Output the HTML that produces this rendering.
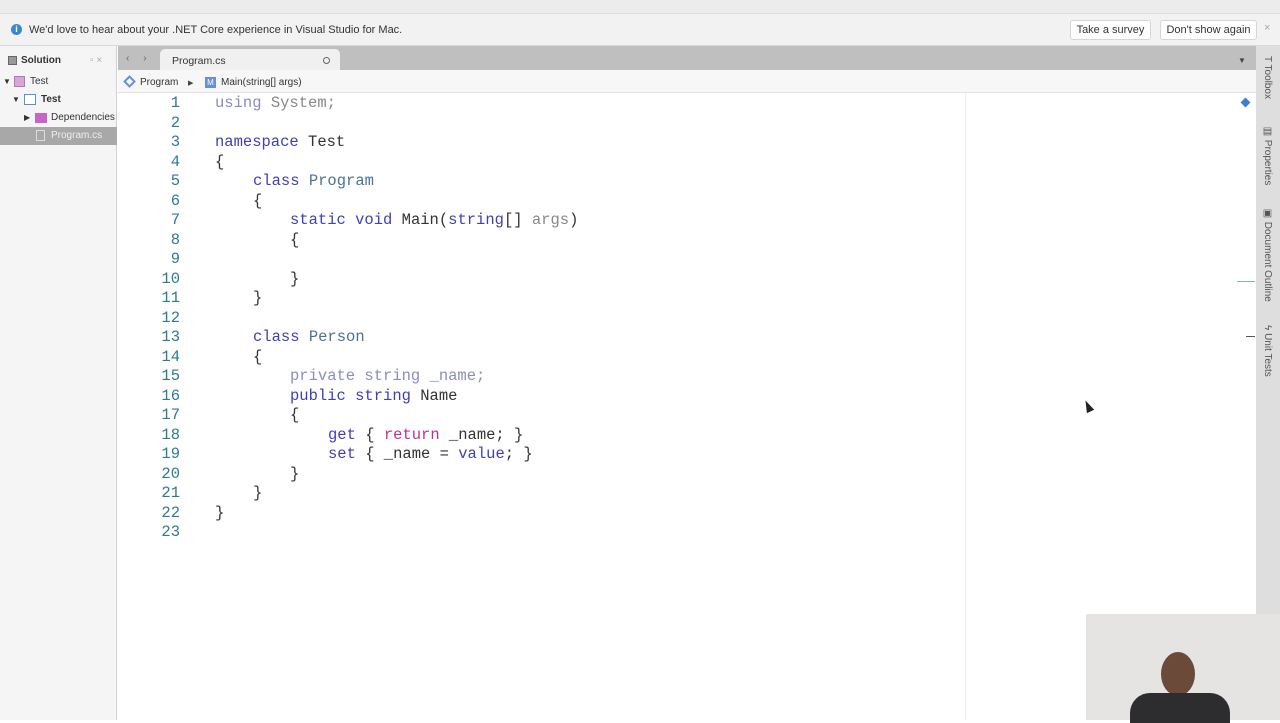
<!DOCTYPE html>
<html><head><style>
*{margin:0;padding:0;box-sizing:border-box}
body{width:1280px;height:720px;overflow:hidden;background:#fff;font-family:"Liberation Sans",sans-serif;position:relative}
.abs{position:absolute}
.code{font-family:"Liberation Mono",monospace;font-size:15.5px;color:#333}
.ln{position:absolute;left:140px;width:40px;text-align:right;color:#2d7b8c}
.l{position:absolute;white-space:pre}
.k{color:#3f3fb8}.t{color:#4a7290}.g{color:#8c8cc0}.r{color:#b8329a}
</style></head><body>
<div class="abs" style="left:0;top:0;width:1280px;height:14px;background:#ececec;border-bottom:1px solid #ddd"></div>
<div class="abs" style="left:0;top:14px;width:1280px;height:32px;background:#f2f2f2;border-bottom:1px solid #d8d8d8"></div>
<div class="abs" style="left:11px;top:24px;width:11px;height:11px;border-radius:50%;background:#3b86d1;color:#fff;font-size:9px;text-align:center;line-height:11px;font-weight:bold">i</div>
<div class="abs" style="left:29px;top:24px;font-size:11px;color:#333">We'd love to hear about your .NET Core experience in Visual Studio for Mac.</div>
<div class="abs" style="left:1070px;top:20px;width:81px;height:20px;background:#fff;border:1px solid #d6d6d6;border-radius:3px;font-size:11px;color:#333;text-align:center;line-height:19px">Take a survey</div>
<div class="abs" style="left:1160px;top:20px;width:97px;height:20px;background:#fff;border:1px solid #d6d6d6;border-radius:3px;font-size:11px;color:#333;text-align:center;line-height:19px">Don't show again</div>
<div class="abs" style="left:1264px;top:22px;font-size:11px;color:#aaa">×</div>
<!-- sidebar -->
<div class="abs" style="left:0;top:46px;width:117px;height:674px;background:#f5f5f5;border-right:1px solid #d0d0d0"></div>
<div class="abs" style="left:8px;top:56px;width:9px;height:9px;border:1px solid #666;background:#999"></div>
<div class="abs" style="left:21px;top:55px;font-size:10px;font-weight:bold;color:#333">Solution</div>
<div class="abs" style="left:90px;top:55px;font-size:10px;color:#aaa">▫ ×</div>
<div class="abs" style="left:3px;top:77px;font-size:8px;color:#333">▼</div>
<div class="abs" style="left:14px;top:76px;width:11px;height:11px;background:#d7a6d8;border:1px solid #b27ab5"></div>
<div class="abs" style="left:30px;top:76px;font-size:10px;color:#333">Test</div>
<div class="abs" style="left:12px;top:95px;font-size:8px;color:#333">▼</div>
<div class="abs" style="left:24px;top:94px;width:12px;height:11px;border:1px solid #5a8fd0;background:#fff"></div>
<div class="abs" style="left:41px;top:94px;font-size:10px;font-weight:bold;color:#333">Test</div>
<div class="abs" style="left:24px;top:113px;font-size:8px;color:#333">▶</div>
<div class="abs" style="left:35px;top:113px;width:12px;height:10px;background:#c465c8"></div>
<div class="abs" style="left:51px;top:112px;font-size:10px;color:#333">Dependencies</div>
<div class="abs" style="left:0;top:127px;width:117px;height:18px;background:#a8a8a8"></div>
<div class="abs" style="left:36px;top:130px;width:9px;height:11px;border:1px solid #ddd"></div>
<div class="abs" style="left:51px;top:130px;font-size:10px;color:#eee">Program.cs</div>
<!-- tabs -->
<div class="abs" style="left:118px;top:46px;width:1138px;height:24px;background:#bfbfbf"></div>
<div class="abs" style="left:126px;top:53px;font-size:10px;color:#666">‹ &nbsp;&nbsp;&nbsp; ›</div>
<div class="abs" style="left:160px;top:49px;width:180px;height:21px;background:#f0f0f0;border-radius:5px 5px 0 0"></div>
<div class="abs" style="left:172px;top:55px;font-size:10.5px;color:#333">Program.cs</div>
<div class="abs" style="left:323px;top:57px;width:7px;height:7px;border:1px solid #666;border-radius:50%"></div>
<div class="abs" style="left:1238px;top:56px;font-size:8px;color:#444">▼</div>
<div class="abs" style="left:118px;top:70px;width:1138px;height:23px;background:#f7f7f7;border-bottom:1px solid #e2e2e2"></div>
<div class="abs" style="left:125px;top:77px;width:9px;height:9px;border:2px solid #6a8ed4;transform:rotate(45deg)"></div>
<div class="abs" style="left:140px;top:77px;font-size:10px;color:#333">Program</div>
<div class="abs" style="left:188px;top:79px;font-size:7px;color:#444">▶</div>
<div class="abs" style="left:205px;top:77px;width:11px;height:11px;background:#6a8ed4;color:#fff;font-size:8px;text-align:center;line-height:11px">M</div>
<div class="abs" style="left:221px;top:77px;font-size:10px;color:#333">Main(string[] args)</div>
<!-- editor -->
<div class="abs" style="left:965px;top:93px;width:1px;height:627px;background:#eee"></div>
<div class="abs" style="left:1242px;top:99px;width:7px;height:7px;background:#3b7fd0;transform:rotate(45deg)"></div>
<div class="abs" style="left:1237px;top:281px;width:18px;height:1px;background:#8aaed8"></div>
<div class="abs" style="left:1246px;top:336px;width:9px;height:1px;background:#555"></div>
<div class="abs code" style="left:0;top:94px;width:960px;height:460px">
<div class="ln" style="top:0">1</div><div class="l" style="top:0;left:215px"><span class="g">using</span> <span style="color:#888">System;</span></div>
<div class="ln" style="top:19.5px">2</div>
<div class="ln" style="top:39px">3</div><div class="l" style="top:39px;left:215px"><span class="k">namespace</span> Test</div>
<div class="ln" style="top:58.5px">4</div><div class="l" style="top:58.5px;left:215px">{</div>
<div class="ln" style="top:78px">5</div><div class="l" style="top:78px;left:253px"><span class="k">class</span> <span class="t">Program</span></div>
<div class="ln" style="top:97.5px">6</div><div class="l" style="top:97.5px;left:253px">{</div>
<div class="ln" style="top:117px">7</div><div class="l" style="top:117px;left:290px"><span class="k">static</span> <span class="k">void</span> Main(<span class="k">string</span>[] <span style="color:#888">args</span>)</div>
<div class="ln" style="top:136.5px">8</div><div class="l" style="top:136.5px;left:290px">{</div>
<div class="ln" style="top:156px">9</div>
<div class="ln" style="top:175.5px">10</div><div class="l" style="top:175.5px;left:290px">}</div>
<div class="ln" style="top:195px">11</div><div class="l" style="top:195px;left:253px">}</div>
<div class="ln" style="top:214.5px">12</div>
<div class="ln" style="top:234px">13</div><div class="l" style="top:234px;left:253px"><span class="k">class</span> <span class="t">Person</span></div>
<div class="ln" style="top:253.5px">14</div><div class="l" style="top:253.5px;left:253px">{</div>
<div class="ln" style="top:273px">15</div><div class="l" style="top:273px;left:290px"><span class="g">private string _name;</span></div>
<div class="ln" style="top:292.5px">16</div><div class="l" style="top:292.5px;left:290px"><span class="k">public</span> <span class="k">string</span> Name</div>
<div class="ln" style="top:312px">17</div><div class="l" style="top:312px;left:290px">{</div>
<div class="ln" style="top:331.5px">18</div><div class="l" style="top:331.5px;left:328px"><span class="k">get</span> { <span class="r">return</span> _name; }</div>
<div class="ln" style="top:351px">19</div><div class="l" style="top:351px;left:328px"><span class="k">set</span> { _name = <span class="k">value</span>; }</div>
<div class="ln" style="top:370.5px">20</div><div class="l" style="top:370.5px;left:290px">}</div>
<div class="ln" style="top:390px">21</div><div class="l" style="top:390px;left:253px">}</div>
<div class="ln" style="top:409.5px">22</div><div class="l" style="top:409.5px;left:215px">}</div>
<div class="ln" style="top:429px">23</div>
</div>
<!-- right strip -->
<div class="abs" style="left:1256px;top:46px;width:24px;height:674px;background:#dedede"></div>
<div class="abs" style="left:1262px;top:56px;font-size:10px;color:#555;writing-mode:vertical-rl">T Toolbox</div>
<div class="abs" style="left:1262px;top:126px;font-size:10px;color:#555;writing-mode:vertical-rl">▤ Properties</div>
<div class="abs" style="left:1262px;top:208px;font-size:10px;color:#555;writing-mode:vertical-rl">▣ Document Outline</div>
<div class="abs" style="left:1262px;top:325px;font-size:10px;color:#555;writing-mode:vertical-rl">ϟ Unit Tests</div>
<!-- cursor -->
<div class="abs" style="left:1084px;top:400px;width:0;height:0;border-left:4px solid transparent;border-right:4px solid transparent;border-bottom:12px solid #222;transform:rotate(-25deg)"></div>
<!-- webcam -->
<div class="abs" style="left:1086px;top:614px;width:194px;height:106px;background:#e6e4e2"></div>
<div class="abs" style="left:1161px;top:652px;width:34px;height:44px;border-radius:50%;background:#6b4a3a"></div>
<div class="abs" style="left:1130px;top:693px;width:100px;height:30px;border-radius:20px 20px 0 0;background:#2d2d2f"></div>
</body></html>
